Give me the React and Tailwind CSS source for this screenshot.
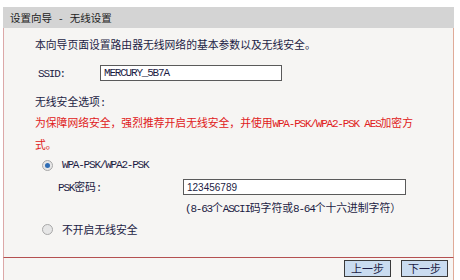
// Wireless setup wizard page
const cjk = { fontFamily: '"Noto Sans CJK SC", "Liberation Sans", sans-serif' };

function M({ children }) {
  return (
    <span className="text-[11px] tracking-[-1.2px]" style={{ fontFamily: '"Liberation Mono", monospace' }}>
      {children}
    </span>
  );
}

function Radio({ checked }) {
  return (
    <div className="w-[11px] h-[11px] rounded-full border border-[#a8a8a8] bg-[#e6e6e6] flex items-center justify-center">
      {checked && <div className="w-[5px] h-[5px] rounded-full bg-[#2f6db5]" />}
    </div>
  );
}

export default function App() {
  return (
    <div className="w-[460px] h-[280px] bg-white pt-[7px] pl-[3px] flex flex-col text-[10.8px] text-[#1c1c44]" style={cjk}>
      <div className="w-[451px] h-[21px] bg-[#d4d4d4] pl-[7px] flex items-center text-[10.5px] text-[#222]">
        <span>设置向导</span>
        <span className="mx-[7px]">-</span>
        <span>无线设置</span>
      </div>

      <div className="w-[451px] h-[230px] bg-[#f6f5f3] border-l border-r border-b border-l-[#dca8a8] border-r-[#e0aa98] border-b-[#b45050] pl-[31px] flex flex-col">
        <div className="mt-[8px] h-[16px] leading-[16px]">本向导页面设置路由器无线网络的基本参数以及无线安全。</div>

        <div className="mt-[13px] h-[16px] flex items-center">
          <div className="w-[65px] pl-[3px]"><M>SSID:</M></div>
          <div className="w-[182px] h-[16px] bg-white border border-[#5a5a5a] pl-[3px] flex items-center">
            <M>MERCURY_5B7A</M>
          </div>
        </div>

        <div className="mt-[12px] h-[16px] leading-[16px]">无线安全选项<M>:</M></div>

        <div className="mt-[3px] leading-[20px] text-[#e02020]">
          为保障网络安全，强烈推荐开启无线安全，并使用<M>WPA-PSK/WPA2-PSK AES</M>加密方
          <br />
          式。
        </div>

        <div className="mt-[3px] h-[16px] flex items-center pl-[7px] gap-[9px]">
          <Radio checked />
          <M>WPA-PSK/WPA2-PSK</M>
        </div>

        <div className="mt-[6px] h-[16px] flex items-center">
          <div className="w-[148px] pl-[23px]"><M>PSK</M>密码<M>:</M></div>
          <div className="w-[223px] h-[16px] bg-white border border-[#5a5a5a] pl-[3px] flex items-center text-[10px]" style={{ fontFamily: '"Liberation Sans", sans-serif' }}>
            123456789
          </div>
        </div>

        <div className="mt-[4px] h-[16px] leading-[16px] pl-[150px]">
          <M>(8-63</M>个<M>ASCII</M>码字符或<M>8-64</M>个十六进制字符）
        </div>

        <div className="mt-[6px] h-[16px] flex items-center pl-[7px] gap-[9px]">
          <Radio />
          <span>不开启无线安全</span>
        </div>
      </div>

      <div className="w-[451px] flex-1 bg-[#f6f5f3] border-l border-r border-l-[#dca8a8] border-r-[#e0aa98] flex justify-end items-start pt-[2px] pr-[5px] gap-[10px]">
        <button className="w-[47px] h-[17px] bg-[#cadcf0] border border-[#3a3a3a] text-[11px] leading-[15px] text-[#1c1c44]">上一步</button>
        <button className="w-[47px] h-[17px] bg-[#cadcf0] border border-[#3a3a3a] text-[11px] leading-[15px] text-[#1c1c44]">下一步</button>
      </div>
    </div>
  );
}
